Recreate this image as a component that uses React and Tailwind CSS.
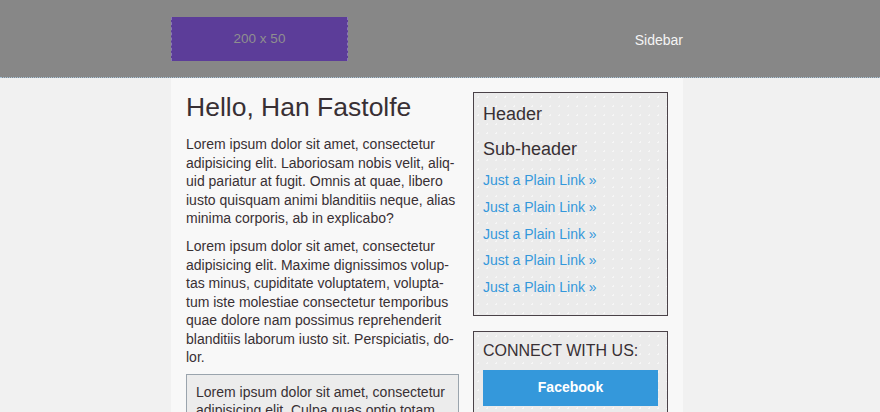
export default function App() {
  const links = ['Just a Plain Link', 'Just a Plain Link', 'Just a Plain Link', 'Just a Plain Link', 'Just a Plain Link'];

  return (
    <div lang="en" className="min-h-screen bg-[#f1f1f1] font-['Liberation_Sans',Arial,sans-serif] text-[#383034]">
      {/* Top bar */}
      <header className="h-[78px] bg-[#878787] border-b border-dotted border-[#a8c4da]">
        <div className="w-[512px] ml-[171px] flex items-start justify-between">
          <div className="mt-[17px] w-[177px] h-[44px] bg-[#5c3d99] border-x border-dashed border-[#8a78b8] flex items-center justify-center text-[13.5px] text-[#8f8f8f]">
            200 x 50
          </div>
          <div className="mt-[30px] text-[14px] text-[#f4f4f4]">Sidebar</div>
        </div>
      </header>

      {/* Page body */}
      <div className="w-[512px] ml-[171px] bg-[#f8f8f8] px-[15px] pt-[14px] pb-6 flex gap-[14px]">
        {/* Main column */}
        <main className="w-[273px] shrink-0">
          <h1 className="text-[26.5px] leading-[30px] text-[#383034]">Hello, Han Fastolfe</h1>
          <p className="mt-[13px] text-[14px] leading-[18.5px]">
            Lorem ipsum dolor sit amet, consectetur adipisicing elit. Laboriosam nobis velit, aliq&shy;uid pariatur at fugit. Omnis at quae, libero iusto quisquam animi blanditiis neque, alias minima corporis, ab in explicabo?
          </p>
          <p className="mt-[9.5px] text-[14px] leading-[18.5px]">
            Lorem ipsum dolor sit amet, consectetur adipisicing elit. Maxime dignissimos volup&shy;tas minus, cupiditate voluptatem, volupta&shy;tum iste molestiae consectetur temporibus quae dolore nam possimus reprehenderit blanditiis laborum iusto sit. Perspiciatis, do&shy;lor.
          </p>
          <div className="mt-[7px] border border-[#9aa4ad] bg-[#ececec] px-[9px] py-[8px] text-[14px] leading-[18.5px]">
            Lorem ipsum dolor sit amet, consectetur adipisicing elit. Culpa quas optio totam, nihil laudantium eveniet.
          </div>
        </main>

        {/* Sidebar */}
        <aside className="w-[195px] shrink-0 flex flex-col gap-[15px]">
          <div className="border border-[#4a4248] bg-[#ebebeb] bg-[radial-gradient(#f6f6f6_1px,transparent_1px)] bg-[length:9px_9px] px-[9px] pt-[10px] pb-[10px]">
            <h3 className="text-[18px] leading-[22px]">Header</h3>
            <h4 className="mt-[13px] text-[18px] leading-[22px]">Sub-header</h4>
            <ul className="mt-[11px] flex flex-col">
              {links.map((l, i) => (
                <li key={i} className="h-[26.75px] leading-[18px]">
                  <a href="#" className="text-[14px] text-[#3498db]">{l} &raquo;</a>
                </li>
              ))}
            </ul>
          </div>

          <div className="border border-[#4a4248] bg-[#ebebeb] bg-[radial-gradient(#f6f6f6_1px,transparent_1px)] bg-[length:9px_9px] px-[9px] pt-[10px] pb-[10px]">
            <h3 className="text-[16px] leading-[18px] uppercase">Connect with us:</h3>
            <a href="#" className="mt-[10px] flex h-[36px] items-center justify-center bg-[#3498db] text-[14px] font-bold text-white">
              Facebook
            </a>
          </div>
        </aside>
      </div>
    </div>
  );
}
